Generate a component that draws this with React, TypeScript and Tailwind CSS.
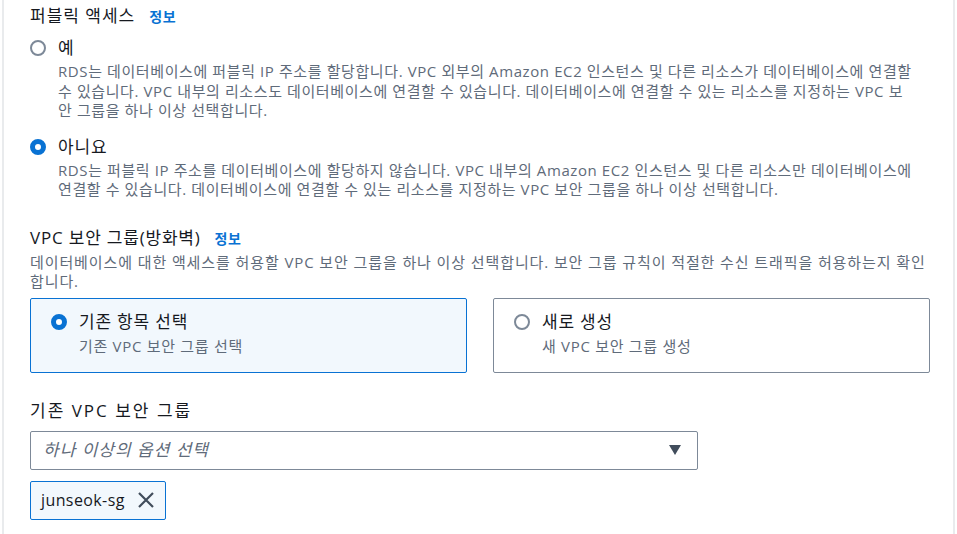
import React from "react";

const font = { fontFamily: '"Open Sans", "Noto Sans CJK KR", sans-serif' };

function Radio({ checked }: { checked: boolean }) {
  return checked ? (
    <span className="inline-block w-[16px] h-[16px] rounded-full border-[5px] border-[#0972d3] bg-white shrink-0" />
  ) : (
    <span className="inline-block w-[16px] h-[16px] rounded-full border-2 border-[#7d8998] bg-white shrink-0" />
  );
}

export default function App() {
  return (
    <div className="bg-white w-[957px] h-[534px] overflow-hidden" style={font}>
      <div className="ml-[2px] w-[953px] h-[534px] border-l-2 border-r-2 border-[#e9ebed] pl-[26px] text-[#16191f]">
        <div className="flex items-baseline gap-[14px] pt-[4px] h-[24px]">
          <span className="text-[17px] leading-[24px] tracking-[1px]">퍼블릭 액세스</span>
          <span className="text-[14px] font-bold text-[#0972d3] tracking-[0.5px]">정보</span>
        </div>

        <div className="mt-[12px] flex items-center gap-[12px] h-[24px]">
          <Radio checked={false} />
          <span className="text-[17px] leading-[24px] tracking-[0.8px]">예</span>
        </div>
        <p className="mt-[2px] ml-[28px] w-[859px] text-[15px] leading-[19.5px] text-[#5f6b7a] tracking-[0.6px]">
          RDS는 데이터베이스에 퍼블릭 IP 주소를 할당합니다. VPC 외부의 Amazon EC2 인스턴스 및 다른 리소스가 데이터베이스에 연결할 수 있습니다. VPC 내부의 리소스도 데이터베이스에 연결할 수 있습니다. 데이터베이스에 연결할 수 있는 리소스를 지정하는 VPC 보안 그룹을 하나 이상 선택합니다.
        </p>

        <div className="mt-[14px] flex items-center gap-[12px] h-[24px]">
          <Radio checked={true} />
          <span className="text-[17px] leading-[24px] tracking-[0.8px]">아니요</span>
        </div>
        <p className="mt-[2px] ml-[28px] w-[866px] text-[15px] leading-[19.5px] text-[#5f6b7a] tracking-[0.6px]">
          RDS는 퍼블릭 IP 주소를 데이터베이스에 할당하지 않습니다. VPC 내부의 Amazon EC2 인스턴스 및 다른 리소스만 데이터베이스에 연결할 수 있습니다. 데이터베이스에 연결할 수 있는 리소스를 지정하는 VPC 보안 그룹을 하나 이상 선택합니다.
        </p>

        <div className="mt-[26px] flex items-baseline gap-[14px] h-[27px]">
          <span className="text-[17px] leading-[24px] tracking-[0.8px]">VPC 보안 그룹(방화벽)</span>
          <span className="text-[14px] font-bold text-[#0972d3] tracking-[0.5px]">정보</span>
        </div>
        <p className="w-[898px] text-[15px] leading-[19.5px] text-[#5f6b7a] tracking-[0.9px]">
          데이터베이스에 대한 액세스를 허용할 VPC 보안 그룹을 하나 이상 선택합니다. 보안 그룹 규칙이 적절한 수신 트래픽을 허용하는지 확인합니다.
        </p>

        <div className="mt-[6px] flex gap-[26px]">
          <div className="w-[437px] h-[75px] rounded-[2px] border border-[#0972d3] bg-[#f2f8fd] pl-[20px] pt-[11px]">
            <div className="flex items-center gap-[12px] h-[24px]">
              <Radio checked={true} />
              <span className="text-[17px] leading-[24px] tracking-[0.8px]">기존 항목 선택</span>
            </div>
            <div className="ml-[28px] text-[15px] leading-[24px] text-[#5f6b7a] tracking-[0.7px]">기존 VPC 보안 그룹 선택</div>
          </div>
          <div className="w-[437px] h-[75px] rounded-[2px] border border-[#7d8998] bg-white pl-[20px] pt-[11px]">
            <div className="flex items-center gap-[12px] h-[24px]">
              <Radio checked={false} />
              <span className="text-[17px] leading-[24px] tracking-[0.8px]">새로 생성</span>
            </div>
            <div className="ml-[28px] text-[15px] leading-[24px] text-[#5f6b7a] tracking-[0.7px]">새 VPC 보안 그룹 생성</div>
          </div>
        </div>

        <div className="mt-[26px] text-[17px] leading-[24px] h-[24px] tracking-[2px]">기존 VPC 보안 그룹</div>

        <div className="mt-[8px] w-[668px] h-[39px] rounded-[2px] border border-[#7d8998] flex items-center justify-between pl-[12px] pr-[16px]">
          <span className="text-[17px] italic text-[#5f6b7a] tracking-[1px]">하나 이상의 옵션 선택</span>
          <svg width="12" height="10" viewBox="0 0 12 10">
            <path d="M0 0 H12 L6 10 Z" fill="#414d5c" />
          </svg>
        </div>

        <div className="mt-[11px] inline-flex items-center h-[39px] rounded-[2px] border border-[#0972d3] bg-[#f2f8fd] pl-[10px] pr-[10px] gap-[12px]">
          <span className="text-[16px] text-[#16191f] tracking-[0.4px]">junseok-sg</span>
          <svg width="18" height="18" viewBox="0 0 18 18">
            <path d="M2 2 L16 16 M16 2 L2 16" stroke="#414d5c" strokeWidth="2.2" />
          </svg>
        </div>
      </div>
    </div>
  );
}
